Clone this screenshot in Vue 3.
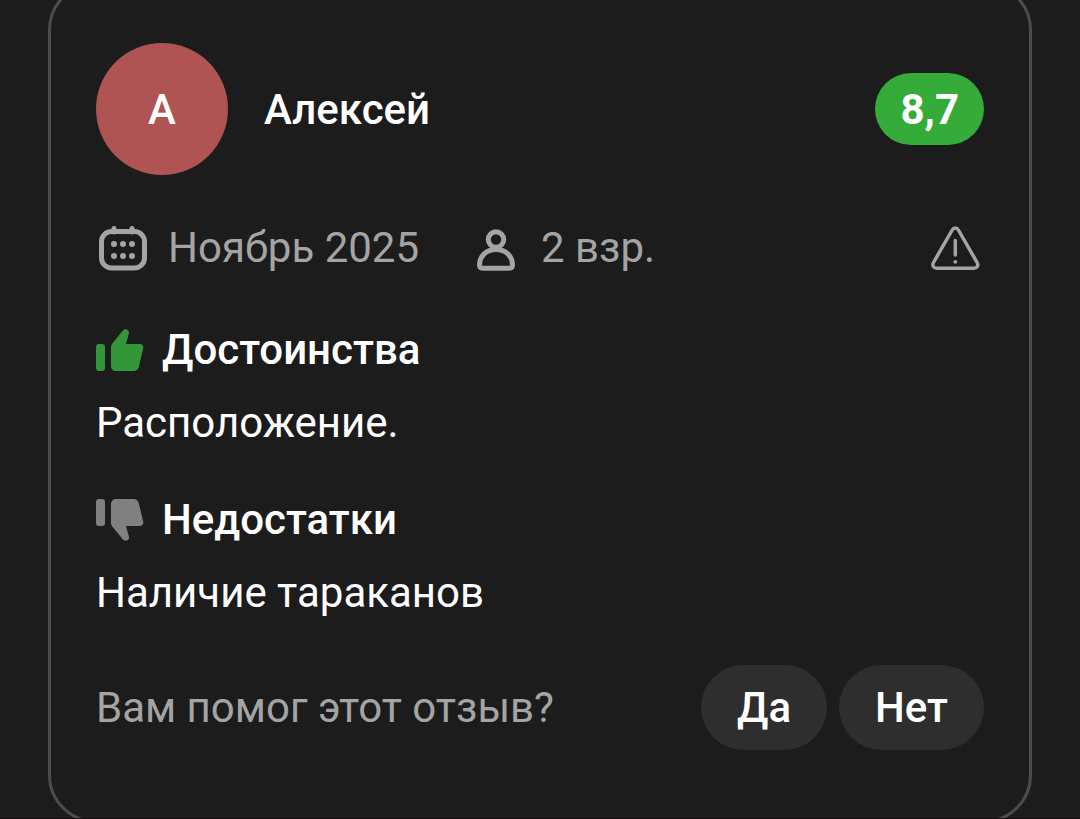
<script setup>
const review = {
  initial: 'А',
  author: 'Алексей',
  score: '8,7',
  date: 'Ноябрь 2025',
  guests: '2 взр.',
  pros: 'Расположение.',
  cons: 'Наличие тараканов',
}
const dots = [
  [18, 23], [27, 23], [36, 23],
  [18, 35], [27, 35], [36, 35],
]
</script>

<template>
  <main class="page">
    <article class="card">
      <header class="head">
        <span class="avatar" aria-hidden="true">{{ review.initial }}</span>
        <h2 class="author">{{ review.author }}</h2>
        <span class="score">{{ review.score }}</span>
      </header>

      <div class="meta">
        <span class="fact">
          <svg class="icon" viewBox="0 0 54 54" aria-hidden="true">
            <rect x="5.5" y="10.5" width="43" height="36.5" rx="10" fill="none" stroke="currentColor" stroke-width="5" />
            <path d="M18 7.5V11M36 7.5V11" stroke="currentColor" stroke-width="5" stroke-linecap="round" />
            <circle v-for="[x, y] in dots" :key="`${x}-${y}`" :cx="x" :cy="y" r="3" fill="currentColor" />
          </svg>
          <span>{{ review.date }}</span>
        </span>
        <span class="fact">
          <svg class="icon" viewBox="0 0 54 54" fill="none" stroke="currentColor" stroke-width="5" aria-hidden="true">
            <circle cx="27" cy="18.5" r="7.7" />
            <path d="M27 28.5c-9.500 0-16.500 6.500-16.500 15.500 0 2 1.200 3.200 3.200 3.200h26.600c2 0 3.200-1.200 3.200-3.200 0-9-7-15.500-16.500-15.500Z" />
          </svg>
          <span>{{ review.guests }}</span>
        </span>
        <button class="report" type="button" aria-label="Пожаловаться">
          <svg class="icon" viewBox="0 0 54 54" fill="none" stroke="currentColor" stroke-width="3.500" stroke-linecap="round" stroke-linejoin="round" aria-hidden="true">
            <path d="M22.200 9L3.500 41.500c-1.600 2.900 0 5.800 3.200 5.800h37.200c3.200 0 4.800-2.900 3.200-5.800L28.400 9c-1.500-2.600-4.700-2.600-6.200 0Z" />
            <path d="M25.300 19.500V34" />
            <circle cx="25.300" cy="40.800" r="1.900" fill="currentColor" stroke="none" />
          </svg>
        </button>
      </div>

      <section class="opinion">
        <h3 class="title">
          <svg class="thumb up" viewBox="0 0 48 48" fill="currentColor" aria-hidden="true">
            <rect x="0" y="18" width="9" height="27" rx="3" />
            <path d="M15 21.500c0-1.800.500-3.200 1.700-4.600L26.500 5c1.200-1.500 2.600-2 4.200-1.600 1.800.500 2.600 2.200 2.200 4L30 18h13.500c2.900 0 4.300 2 3.700 4.600l-4.500 18.500c-.700 2.700-2.500 3.900-5.100 3.900H20.500c-3.600 0-5.500-1.900-5.500-5.500Z" />
          </svg>
          Достоинства
        </h3>
        <p class="text">{{ review.pros }}</p>
      </section>

      <section class="opinion">
        <h3 class="title">
          <svg class="thumb down" viewBox="0 0 48 48" fill="currentColor" aria-hidden="true">
            <rect x="0" y="3" width="9" height="27" rx="3" />
            <path d="M15 26.500c0 1.800.500 3.200 1.700 4.600L26.500 43c1.200 1.500 2.600 2 4.200 1.600 1.800-.500 2.600-2.200 2.200-4L30 30h13.500c2.900 0 4.300-2 3.700-4.600L42.700 6.900C42 4.200 40.200 3 37.600 3H20.500C16.900 3 15 4.900 15 8.500Z" />
          </svg>
          Недостатки
        </h3>
        <p class="text">{{ review.cons }}</p>
      </section>

      <footer class="foot">
        <span class="question">Вам помог этот отзыв?</span>
        <button class="vote" type="button">Да</button>
        <button class="vote" type="button">Нет</button>
      </footer>
    </article>
  </main>
</template>

<style>
body {
  background: #1c1c1c;
}
</style>

<style scoped>
.page {
  display: flex;
  flex-direction: column;
  overflow: hidden;
  border-bottom: 1px solid #160f13;
  background: #1c1c1c;
  color: #fff;
  font-family: Roboto, "Noto Sans", sans-serif;
  font-size: 42px;
  line-height: 49px;
}

.card {
  margin: -18px 48px -5px;
  padding: 58px 45px 70px;
  border: 3px solid #4c4c4c;
  border-radius: 48px;
}

.head,
.meta,
.fact,
.title,
.foot {
  display: flex;
  align-items: center;
}

.avatar {
  display: grid;
  place-items: center;
  width: 132px;
  height: 132px;
  border-radius: 50%;
  background: #af5353;
  font-weight: 500;
}

.author {
  flex: 1;
  margin: 0 36px;
  font-size: 42px;
  font-weight: 500;
}

.score {
  padding: 12px 25px 11px;
  border-radius: 36px;
  background: #35ac3a;
  font-weight: 700;
}

.meta {
  gap: 50px;
  height: 54px;
  margin: 46px 0 50px;
  color: #a4a4a4;
  line-height: 48px;
}

.fact {
  gap: 18px;
}

.icon {
  display: block;
  width: 54px;
  height: 54px;
}

.report {
  margin-left: auto;
  padding: 0;
  border: 0;
  background: none;
  color: inherit;
}

.opinion {
  margin-top: 48px;
}

.title {
  align-items: flex-end;
  gap: 18px;
  margin: 0 0 24px;
  font-size: 42px;
  font-weight: 500;
}

.thumb {
  width: 48px;
  height: 48px;
}

.up {
  color: #339638;
}

.down {
  color: #808080;
}

.text {
  margin: 0;
}

.foot {
  gap: 12px;
  margin-top: 48px;
}

.question {
  flex: 1;
  color: #a4a4a4;
}

.vote {
  padding: 18px 36px;
  border: 0;
  border-radius: 43px;
  background: #2e2e2e;
  color: inherit;
  font: inherit;
  font-weight: 500;
}
</style>
